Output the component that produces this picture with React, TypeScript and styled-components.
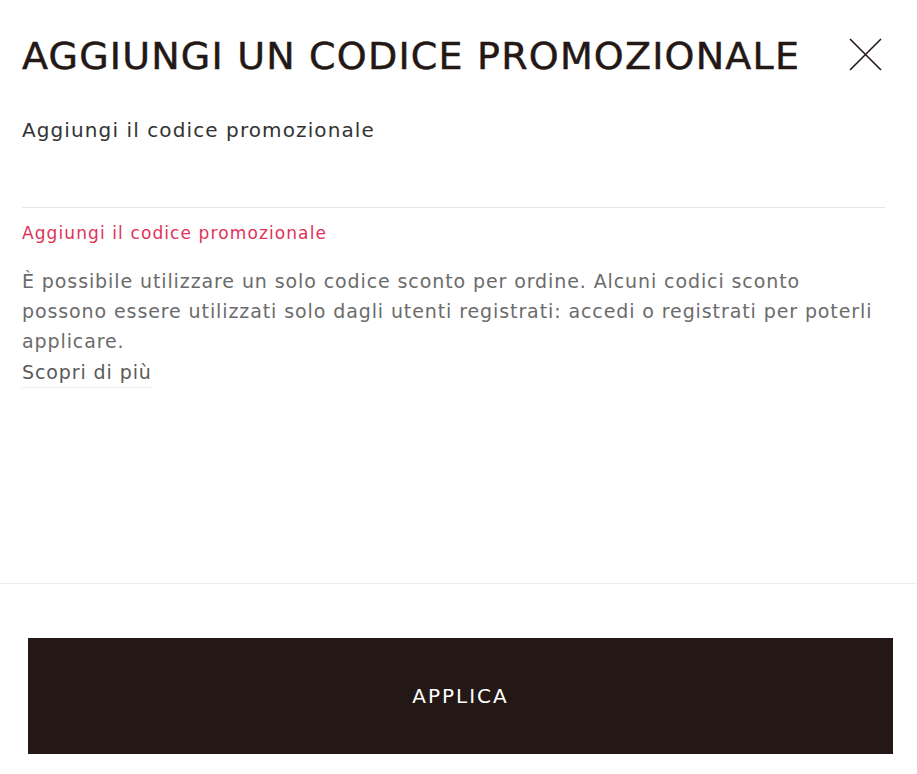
import styled, { createGlobalStyle } from "styled-components";

const GlobalStyle = createGlobalStyle`
  html, body {
    margin: 0;
    padding: 0;
    background: #ffffff;
  }
  body {
    font-family: "DejaVu Sans", "Liberation Sans", sans-serif;
    -webkit-font-smoothing: antialiased;
  }
`;

const Modal = styled.div`
  width: 917px;
  height: 774px;
  display: flex;
  flex-direction: column;
  background: #fff;
  color: #231815;
`;

const Body = styled.div`
  flex: 1;
  padding: 0 32px 0 22px;
`;

const Header = styled.div`
  display: flex;
  align-items: center;
  justify-content: space-between;
  height: 112px;
`;

const Title = styled.h1`
  margin: 0;
  font-size: 38px;
  font-weight: 400;
  letter-spacing: 1.2px;
  color: #231815;
  text-transform: uppercase;
  white-space: nowrap;
  -webkit-text-stroke: 0.5px #231815;
`;

const CloseButton = styled.button`
  border: 0;
  background: none;
  padding: 0;
  width: 34px;
  height: 34px;
  margin: 0 3px 3px 0;
  cursor: pointer;
  display: flex;
  align-items: center;
  justify-content: center;
`;

const Label = styled.label`
  display: block;
  font-size: 20px;
  letter-spacing: 1.1px;
  color: #333;
  margin-top: 6px;
`;

const CodeInput = styled.input`
  display: block;
  width: 100%;
  box-sizing: border-box;
  height: 66px;
  border: 0;
  border-bottom: 1px solid #e6e6e6;
  outline: none;
  font: inherit;
  font-size: 18px;
  padding: 0;
`;

const ErrorText = styled.div`
  margin-top: 15px;
  font-size: 17px;
  letter-spacing: 1.1px;
  color: #e0325a;
`;

const Info = styled.p`
  margin: 23px 0 0;
  font-size: 19px;
  letter-spacing: 0.9px;
  line-height: 30px;
  color: #6b6b6b;
`;

const MoreLink = styled.a`
  display: inline-block;
  margin-top: 2px;
  line-height: 28px;
  color: #5a5a5a;
  text-decoration: none;
  border-bottom: 1px solid #eee;
  padding-bottom: 1px;
`;

const Footer = styled.div`
  border-top: 1px solid #ececec;
  padding: 54px 24px 20px 28px;
`;

const ApplyButton = styled.button`
  display: block;
  width: 100%;
  height: 116px;
  border: 0;
  background: #231815;
  color: #fff;
  font-family: inherit;
  font-size: 20px;
  font-weight: 400;
  letter-spacing: 2px;
  cursor: pointer;
`;

export default function App() {
  return (
    <>
      <GlobalStyle />
      <Modal>
        <Body>
          <Header>
            <Title>Aggiungi un codice promozionale</Title>
            <CloseButton aria-label="Chiudi">
              <svg width="33" height="33" viewBox="0 0 33 33" fill="none">
                <path d="M1 1L32 32M32 1L1 32" stroke="#231815" strokeWidth="1.6" />
              </svg>
            </CloseButton>
          </Header>
          <Label htmlFor="promo">Aggiungi il codice promozionale</Label>
          <CodeInput id="promo" type="text" />
          <ErrorText>Aggiungi il codice promozionale</ErrorText>
          <Info>
            È possibile utilizzare un solo codice sconto per ordine. Alcuni codici sconto
            possono essere utilizzati solo dagli utenti registrati: accedi o registrati per
            poterli applicare.
            <br />
            <MoreLink href="#">Scopri di più</MoreLink>
          </Info>
        </Body>
        <Footer>
          <ApplyButton>APPLICA</ApplyButton>
        </Footer>
      </Modal>
    </>
  );
}
